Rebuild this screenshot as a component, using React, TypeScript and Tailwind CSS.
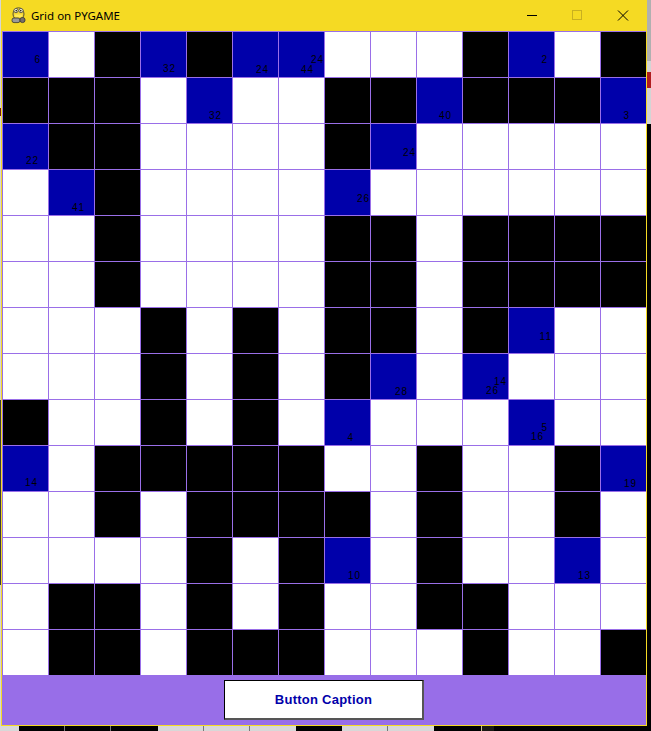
const rows = [
  "BWKBKBBWWWKBWK",
  "KKKWBWWKKBKKKB",
  "BKKWWWWKBWWWWW",
  "WBKWWWWBWWWWWW",
  "WWKWWWWKKWKKKK",
  "WWKWWWWKKWKKKK",
  "WWWKWKWKKWKBWW",
  "WWWKWKWKBWBWWW",
  "KWWKWKWBWWWBWW",
  "BWKKKKKWWKWWKB",
  "WWKWKKKKWKWWKW",
  "WWWWKWKBWKWWBW",
  "WKKWKWKWWKKWWW",
  "WKKWKKKWWWKWWK",
];

// [row, col, label, right edge inside cell, digit bottom inside cell]
const labels: [number, number, string, number, number][] = [
  [0, 0, "6", 38, 32],
  [0, 3, "32", 35, 41],
  [0, 5, "24", 36, 42],
  [0, 6, "24", 45, 32],
  [0, 6, "44", 35, 42],
  [0, 11, "2", 39, 32],
  [1, 4, "32", 35, 42],
  [1, 9, "40", 35, 42],
  [1, 13, "3", 29, 42],
  [2, 0, "22", 36, 41],
  [2, 8, "24", 45, 33],
  [3, 1, "41", 36, 42],
  [3, 7, "26", 45, 33],
  [6, 11, "11", 43, 33],
  [7, 8, "28", 37, 42],
  [7, 10, "14", 44, 32],
  [7, 10, "26", 36, 41],
  [8, 7, "4", 29, 42],
  [8, 11, "5", 39, 32],
  [8, 11, "16", 35, 41],
  [9, 0, "14", 35, 41],
  [9, 13, "19", 36, 42],
  [11, 7, "10", 36, 42],
  [11, 12, "13", 36, 42],
];

const cellColor: Record<string, string> = {
  B: "bg-[#0000aa]",
  W: "bg-white",
  K: "bg-black",
};

function PygameIcon() {
  return (
    <svg width="15" height="17" viewBox="0 0 15 17" className="ml-[9px] shrink-0">
      <ellipse cx="7.5" cy="7" rx="5.5" ry="6.2" fill="#f3d632" stroke="#55503a" strokeWidth="1" />
      <circle cx="5" cy="3.6" r="2.1" fill="#fbf6d0" stroke="#444" strokeWidth="0.8" />
      <circle cx="10" cy="3.6" r="2.1" fill="#fbf6d0" stroke="#444" strokeWidth="0.8" />
      <circle cx="5.2" cy="3.8" r="0.8" fill="#000" />
      <circle cx="9.8" cy="3.8" r="0.8" fill="#000" />
      <path d="M3.5 7.5h8l-1 2.5h-6z" fill="#ffe95a" />
      <rect x="1" y="11" width="8" height="4.6" rx="2" fill="#9a9a9a" stroke="#333" strokeWidth="0.8" />
      <circle cx="11.5" cy="13" r="2.6" fill="#77706a" stroke="#333" strokeWidth="0.8" />
    </svg>
  );
}

function TitleBar() {
  return (
    <div className="flex h-[31px] items-center bg-[#f5da23]">
      <PygameIcon />
      <span className="ml-[5px] font-['Noto_Sans',sans-serif] text-[11.5px] text-black">Grid on PYGAME</span>
      <div className="ml-auto flex h-full items-center">
        <svg width="46" height="31" viewBox="0 0 46 31">
          <path d="M19 15.5h10" stroke="#000" strokeWidth="1" />
        </svg>
        <svg width="46" height="31" viewBox="0 0 46 31">
          <rect x="18.5" y="10.5" width="9" height="9" fill="none" stroke="#c9b020" strokeWidth="1" />
        </svg>
        <svg width="46" height="31" viewBox="0 0 46 31">
          <path d="M18 10.5l10 10M28 10.5l-10 10" stroke="#000" strokeWidth="1" />
        </svg>
      </div>
    </div>
  );
}

function Grid() {
  return (
    <div className="grid grid-cols-[repeat(14,46px)]">
      {rows.map((row, r) =>
        row.split("").map((c, col) => (
          <div key={col + "-" + r} className={"relative h-[46px] border-l border-t border-[#9a6fe8] " + cellColor[c]}>
            {labels
              .filter((l) => l[0] === r && l[1] === col)
              .map((l) => (
                <span
                  key={l[2] + l[3]}
                  className="absolute font-['Liberation_Sans',sans-serif] text-[10px] leading-[10px] tracking-[1px] text-black"
                  style={{ right: 45 - l[3], top: l[4] - 9 }}
                >
                  {l[2]}
                </span>
              ))}
          </div>
        ))
      )}
    </div>
  );
}

export default function App() {
  return (
    <div className="flex h-[731px] w-[651px] flex-col overflow-hidden bg-black">
      <div className="flex h-[726px]">
        <div className="flex w-px flex-col bg-[#d6d6d6]">
          <div className="h-[108px]" />
          <div className="h-[8px] bg-[#6e1a10]" />
          <div className="h-[284px]" />
          <div className="h-[185px] bg-[#3a3a3a]" />
        </div>
        <div className="flex w-[646px] flex-col border-x border-b border-[#f5da23]">
          <TitleBar />
          <Grid />
          <div className="flex h-[50px] items-center justify-center bg-[#986ee8]">
            <button className="flex h-[40px] w-[200px] items-center justify-center border border-b-2 border-r-2 border-black border-b-[#555555] border-r-[#555555] bg-white font-['Liberation_Sans',sans-serif] text-[13px] font-bold tracking-[0.25px] text-[#0000aa]">
              Button Caption
            </button>
          </div>
        </div>
        <div className="flex w-[4px] flex-col">
          <div className="h-[61px] bg-[#b0b0b0]" />
          <div className="h-[11px] bg-[#d4d4d4]" />
          <div className="h-[16px] bg-[#b01c20]" />
          <div className="h-[36px] bg-[#d4d4d4]" />
        </div>
      </div>
      <div className="flex h-[5px]">
        <div className="w-[19px] bg-[#d8d8d8]" />
        <div className="w-[46px] border-r border-[#777777] bg-black" />
        <div className="w-[46px] border-r border-[#777777] bg-black" />
        <div className="w-[47px] bg-black" />
        <div className="w-[46px] border-r border-[#777777] bg-[#d8d8d8]" />
        <div className="w-[46px] border-r border-[#777777] bg-[#d8d8d8]" />
        <div className="w-[46px] bg-[#d8d8d8]" />
        <div className="w-[46px] bg-black" />
        <div className="w-[46px] border-r border-[#777777] bg-[#d8d8d8]" />
        <div className="w-[46px] bg-[#d8d8d8]" />
        <div className="w-[47px] bg-black" />
        <div className="w-px bg-[#c8c090]" />
        <div className="w-[12px] bg-[#1a1a14]" />
      </div>
    </div>
  );
}
